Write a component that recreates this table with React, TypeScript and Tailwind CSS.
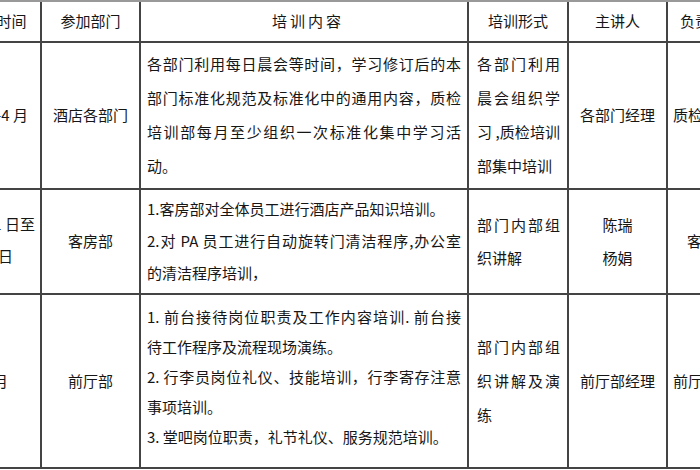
const font = { fontFamily: '"Noto Sans CJK SC", "Noto Sans", sans-serif' }

function J({ children }: { children: React.ReactNode }) {
  return <div className="text-justify [text-align-last:justify] whitespace-nowrap">{children}</div>
}

function L({ children }: { children: React.ReactNode }) {
  return <div className="whitespace-nowrap">{children}</div>
}

const cell = 'border-r-2 border-b-2 border-[#444] flex items-center overflow-hidden whitespace-nowrap'

export default function App() {
  return (
    <div className="w-[700px] h-[470px] overflow-hidden bg-white text-[15px] text-[#161616]" style={font}>
      <div className="grid grid-cols-[59px_99px_328px_100px_99px_120px] grid-rows-[41px_147px_105px_174px] -ml-[17px] w-max border-t-2 border-[#999]">
        {/* 表头 */}
        <div className={`${cell} justify-center`}>时间</div>
        <div className={`${cell} justify-center`}>参加部门</div>
        <div className={`${cell} justify-center pl-2 tracking-[3px]`}>培训内容</div>
        <div className={`${cell} justify-center`}>培训形式</div>
        <div className={`${cell} justify-center`}>主讲人</div>
        <div className={`${cell} justify-start pl-[12px]`}>负责部门</div>

        {/* 第一行 */}
        <div className={`${cell} justify-end pr-[12px]`}>
          <span className="shrink-0">1-4 月</span>
        </div>
        <div className={`${cell} justify-center`}>酒店各部门</div>
        <div className={`${cell} px-[6px] pb-[2px]`}>
          <div className="w-full leading-[34px]">
            <J>各部门利用每日晨会等时间，学习修订后的本</J>
            <J>部门标准化规范及标准化中的通用内容，质检</J>
            <J>培训部每月至少组织一次标准化集中学习活</J>
            <L>动。</L>
          </div>
        </div>
        <div className={`${cell} pl-[8px] pr-[7px] pb-[2px]`}>
          <div className="w-full leading-[34px]">
            <J>各部门利用</J>
            <J>晨会组织学</J>
            <J>习 ,质检培训</J>
            <L>部集中培训</L>
          </div>
        </div>
        <div className={`${cell} justify-center`}>各部门经理</div>
        <div className={`${cell} justify-start pl-[5px]`}>质检部经理</div>

        {/* 第二行 */}
        <div className={`${cell} justify-end pb-[4px]`}>
          <div className="shrink-0 leading-[32px] flex flex-col items-end">
            <div className="pr-[5px]">4 月 1 日至</div>
            <div className="pr-[27px]">4 月 30 日</div>
          </div>
        </div>
        <div className={`${cell} justify-center`}>客房部</div>
        <div className={`${cell} px-[6px] pb-[2px]`}>
          <div className="w-full leading-[32px]">
            <L>1.客房部对全体员工进行酒店产品知识培训。</L>
            <J>2.对 PA 员工进行自动旋转门清洁程序,办公室</J>
            <L>的清洁程序培训，</L>
          </div>
        </div>
        <div className={`${cell} pl-[8px] pr-[7px] pb-[2px]`}>
          <div className="w-full leading-[33px]">
            <J>部门内部组</J>
            <L>织讲解</L>
          </div>
        </div>
        <div className={`${cell} justify-center pb-[2px]`}>
          <div className="leading-[33px] text-center">
            <div>陈瑞</div>
            <div>杨娟</div>
          </div>
        </div>
        <div className={`${cell} justify-start pl-[19px]`}>客房部</div>

        {/* 第三行 */}
        <div className={`${cell} justify-end pr-[32px]`}>
          <span className="shrink-0">3-12 月</span>
        </div>
        <div className={`${cell} justify-center`}>前厅部</div>
        <div className={`${cell} px-[6px] pb-[8px]`}>
          <div className="w-full leading-[30px]">
            <J>1. 前台接待岗位职责及工作内容培训. 前台接</J>
            <L>待工作程序及流程现场演练。</L>
            <J>2. 行李员岗位礼仪、技能培训，行李寄存注意</J>
            <L>事项培训。</L>
            <L>3. 堂吧岗位职责，礼节礼仪、服务规范培训。</L>
          </div>
        </div>
        <div className={`${cell} pl-[8px] pr-[7px]`}>
          <div className="w-full leading-[34px]">
            <J>部门内部组</J>
            <J>织讲解及演</J>
            <L>练</L>
          </div>
        </div>
        <div className={`${cell} justify-center`}>前厅部经理</div>
        <div className={`${cell} justify-start pl-[5px]`}>前厅部经理</div>
      </div>
    </div>
  )
}
